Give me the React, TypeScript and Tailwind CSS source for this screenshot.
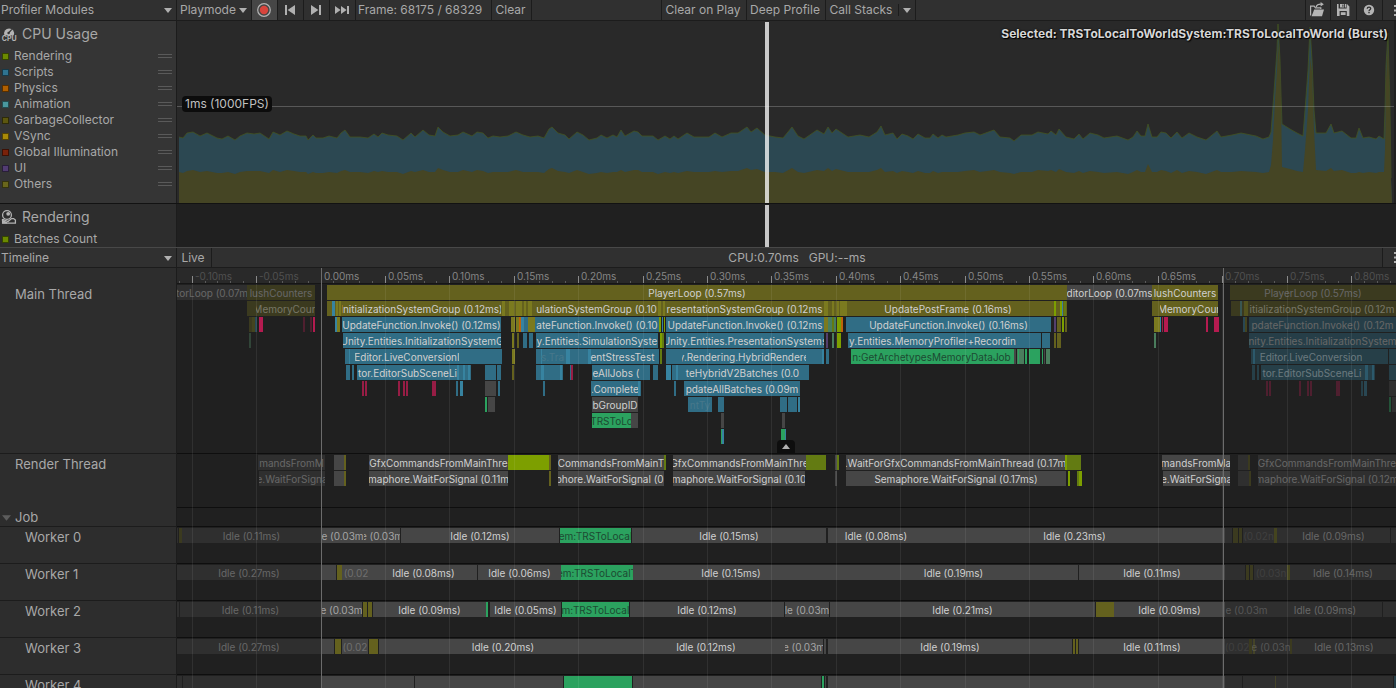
import { clsx } from 'clsx'
import type { ReactNode } from 'react'

// ---------------------------------------------------------------- colours

const TINTS = {
  none: '',
  olive: 'bg-[#64611e]',
  oliveHi: 'bg-[#7b7a1f]',
  blue: 'bg-[#306d85]',
  blueHi: 'bg-[#3783a0]',
  grey: 'bg-[#464646]',
  green: 'bg-[#2ba25f]',
  moss: 'bg-[#4a7d5d]',
  lime: 'bg-[#7d9f00]',
  limeLow: 'bg-[#637b12]',
  red: 'bg-[#971d45]',
  redHi: 'bg-[#b51b50]',
  purple: 'bg-[#53406d]',
  orange: 'bg-[#bd650b]',
}

const LABELS = {
  normal: 'text-[#d0d0d0]',
  soft: 'text-[#a5a5a5]',
  faint: 'text-[#6f6f6f]',
  ghost: 'text-[#47788b]',
  dark: 'text-[#1d4a32]',
}

type Tint = keyof typeof TINTS
type LabelTone = keyof typeof LABELS

// [row, from, to, tint, label, tone]
type Sample = [number, number, number, Tint, string?, LabelTone?]

// ---------------------------------------------------------------- data

const modules = [
  { name: 'Rendering', swatch: 'bg-[#6b8a00]' },
  { name: 'Scripts', swatch: 'bg-[#2f7390]' },
  { name: 'Physics', swatch: 'bg-[#b05f00]' },
  { name: 'Animation', swatch: 'bg-[#4a979e]' },
  { name: 'GarbageCollector', swatch: 'bg-[#5c5710]' },
  { name: 'VSync', swatch: 'bg-[#a88a08]' },
  { name: 'Global Illumination', swatch: 'bg-[#7a220a]' },
  { name: 'UI', swatch: 'bg-[#523c72]' },
  { name: 'Others', swatch: 'bg-[#69661c]' },
]

// visible horizontal range of the charts and the timeline
const VIEW_START = 177
const VIEW_SIZE = 1219
const FRAME_START = 321
const FRAME_END = 1223

const pct = (size: number) => `${(size / VIEW_SIZE) * 100}%`
const at = (x: number) => pct(x - VIEW_START)

// [x, total, others]; "others" follows the total when left out
const frames: [number, number, number?][] = [
  [179, 137], [183, 138], [187, 133], [193, 132], [200, 136], [207, 133], [217, 138], [222, 139], [228, 136],
  [235, 140], [240, 136], [247, 133], [254, 134], [260, 133], [269, 139], [273, 132], [280, 135], [287, 131],
  [294, 134], [300, 136], [306, 136], [308, 140], [313, 135], [316, 138], [323, 138], [329, 136], [337, 138],
  [341, 133], [345, 130], [350, 137], [360, 137], [368, 138], [374, 134], [378, 137], [382, 133], [388, 135],
  [397, 136], [403, 140], [411, 133], [415, 137], [423, 130], [429, 135], [435, 136], [438, 127], [443, 132],
  [450, 136], [458, 135], [463, 132], [472, 136], [477, 132], [483, 133], [488, 138], [493, 136], [500, 137],
  [508, 136], [516, 132], [523, 135], [530, 137], [538, 136], [544, 138], [549, 129], [552, 127], [558, 133],
  [565, 135], [569, 139], [577, 132], [583, 135], [589, 140], [597, 138], [601, 135], [607, 138], [613, 135],
  [617, 137], [621, 130], [625, 136], [634, 131], [638, 132], [642, 136], [653, 136], [658, 140], [665, 136],
  [670, 139], [674, 136], [678, 139], [687, 133], [694, 137], [709, 137], [715, 133], [722, 137], [731, 133],
  [738, 133], [747, 127], [751, 132], [757, 128], [765, 135], [775, 137], [783, 138], [792, 127], [798, 136],
  [804, 139], [817, 130], [824, 134], [828, 127], [832, 133], [836, 129], [848, 137], [860, 135], [869, 137],
  [877, 132], [881, 126], [885, 135], [893, 133], [897, 139], [902, 134], [908, 136], [913, 139], [918, 134],
  [925, 138], [930, 138], [933, 134], [938, 138], [942, 135], [946, 137], [958, 135], [965, 133], [974, 132],
  [980, 135], [994, 130], [1000, 137], [1010, 138], [1014, 141], [1021, 135], [1032, 135], [1038, 132],
  [1048, 134], [1051, 131], [1056, 135], [1059, 129], [1066, 137], [1074, 139], [1079, 134], [1083, 139],
  [1090, 133], [1098, 135], [1104, 138], [1117, 136], [1128, 140], [1133, 137], [1137, 131], [1141, 136],
  [1145, 136], [1148, 124, 164], [1152, 137], [1157, 137], [1161, 132], [1166, 133], [1171, 138], [1177, 132],
  [1182, 138], [1189, 133], [1197, 137], [1206, 140], [1217, 131], [1221, 137], [1232, 135], [1241, 133],
  [1256, 136], [1263, 139], [1269, 137, 172], [1271, 132, 165], [1273, 106, 140], [1275, 78, 100], [1277, 50, 70],
  [1278, 24, 42], [1280, 60, 66], [1281, 95, 100], [1282, 124, 167], [1290, 129, 169], [1297, 133], [1303, 136, 172],
  [1305, 110, 150], [1308, 70, 110], [1310, 27, 57], [1312, 60, 72], [1314, 110, 130], [1316, 133, 170],
  [1326, 133], [1331, 124, 168], [1334, 133], [1342, 131], [1351, 138], [1356, 138], [1359, 128, 172], [1363, 138],
  [1369, 137], [1376, 139], [1379, 136], [1384, 139, 172], [1385, 110, 150], [1386, 66, 80], [1388, 33, 42],
  [1390, 110, 112], [1391, 178, 180],
]

const mainThread: Sample[] = [
  // previous frame
  [0, 177, 247, 'grey', 'torLoop (0.07m'],
  [0, 247, 315, 'olive', 'lushCounters'],
  [1, 247, 315, 'olive'],
  [1, 256, 315, 'none', 'MemoryCoun'],
  [2, 249, 252, 'olive'], [2, 252, 255, 'oliveHi'], [2, 255, 257, 'blueHi'], [2, 259, 263, 'redHi'],
  [2, 303, 305, 'red'], [2, 310, 312, 'red'], [2, 313, 315, 'redHi'],
  [3, 249, 251, 'moss'],
  // selected frame
  [0, 327, 1067, 'olive', 'PlayerLoop (0.57ms)'],
  [0, 1067, 1152, 'grey', 'ditorLoop (0.07ms'],
  [0, 1152, 1218, 'olive', 'lushCounters'],
  [1, 327, 1067, 'olive'],
  [1, 332, 335, 'blueHi'], [1, 336, 338, 'oliveHi'], [1, 339, 341, 'oliveHi'],
  [1, 342, 501, 'none', 'InitializationSystemGroup (0.12ms)'],
  [1, 502, 505, 'oliveHi'], [1, 509, 514, 'oliveHi'], [1, 516, 522, 'oliveHi'], [1, 524, 526, 'oliveHi'],
  [1, 528, 532, 'oliveHi'],
  [1, 535, 658, 'none', 'ulationSystemGroup (0.10'],
  [1, 658, 661, 'oliveHi'], [1, 663, 665, 'oliveHi'],
  [1, 665, 824, 'none', 'resentationSystemGroup (0.12ms'],
  [1, 824, 828, 'oliveHi'], [1, 832, 834, 'oliveHi'], [1, 837, 839, 'oliveHi'], [1, 840, 847, 'oliveHi'],
  [1, 846, 1050, 'none', 'UpdatePostFrame (0.16ms)'],
  [1, 1054, 1056, 'lime'], [1, 1060, 1062, 'lime'], [1, 1062, 1063, 'blueHi'], [1, 1064, 1066, 'limeLow'],
  [1, 1152, 1218, 'olive'],
  [1, 1160, 1218, 'none', 'MemoryCour'],
  [2, 335, 337, 'blueHi'], [2, 337, 340, 'oliveHi'],
  [2, 342, 501, 'blue', 'UpdateFunction.Invoke() (0.12ms)'],
  [2, 511, 515, 'oliveHi'], [2, 516, 519, 'oliveHi'], [2, 519, 521, 'orange'], [2, 521, 524, 'blueHi'],
  [2, 524, 528, 'blue'], [2, 528, 535, 'oliveHi'],
  [2, 535, 659, 'blue', 'ateFunction.Invoke() (0.10'],
  [2, 659, 661, 'lime'], [2, 662, 663, 'blueHi'], [2, 664, 665, 'lime'],
  [2, 666, 824, 'blue', 'UpdateFunction.Invoke() (0.12ms'],
  [2, 824, 828, 'oliveHi'], [2, 828, 832, 'moss'], [2, 832, 834, 'limeLow'], [2, 834, 836, 'moss'],
  [2, 837, 841, 'lime'], [2, 841, 843, 'orange'],
  [2, 846, 1051, 'blue', 'UpdateFunction.Invoke() (0.16ms)'],
  [2, 1054, 1056, 'purple'], [2, 1057, 1061, 'olive'], [2, 1062, 1064, 'lime'], [2, 1065, 1067, 'olive'],
  [2, 1154, 1160, 'oliveHi'], [2, 1160, 1161, 'blueHi'], [2, 1162, 1163, 'red'], [2, 1164, 1168, 'redHi'],
  [2, 1206, 1208, 'redHi'], [2, 1214, 1219, 'redHi'],
  [3, 343, 501, 'blue', 'Unity.Entities.InitializationSystemG'],
  [3, 512, 514, 'oliveHi'], [3, 517, 519, 'olive'], [3, 523, 527, 'blue'], [3, 529, 533, 'blue'],
  [3, 536, 658, 'blue', 'y.Entities.SimulationSyste'],
  [3, 660, 662, 'lime'], [3, 662, 664, 'limeLow'],
  [3, 666, 824, 'blue', 'Unity.Entities.PresentationSystems'],
  [3, 826, 828, 'purple'], [3, 832, 834, 'moss'], [3, 837, 841, 'lime'],
  [3, 848, 1041, 'blue'],
  [3, 848, 1017, 'none', 'y.Entities.MemoryProfiler+Recordin'],
  [3, 1042, 1050, 'blue'], [3, 1054, 1056, 'olive'], [3, 1057, 1061, 'olive'],
  [3, 1154, 1156, 'moss'],
  [4, 345, 502, 'blue'], [4, 349, 350, 'blueHi'],
  [4, 355, 459, 'none', 'Editor.LiveConversionI'],
  [4, 512, 515, 'oliveHi'],
  [4, 536, 659, 'blue'], [4, 541, 542, 'blueHi'], [4, 566, 570, 'blueHi'], [4, 588, 591, 'blueHi'],
  [4, 540, 565, 'none', 's.Tra', 'ghost'],
  [4, 590, 655, 'none', 'entStressTest'],
  [4, 660, 662, 'limeLow'],
  [4, 666, 824, 'blue'], [4, 822, 824, 'blueHi'],
  [4, 682, 806, 'none', 'y.Rendering.HybridRendere'],
  [4, 826, 829, 'blue'],
  [4, 851, 1014, 'green'],
  [4, 851, 1012, 'none', 'n:GetArchetypesMemoryDataJob', 'dark'],
  [4, 1014, 1016, 'grey'], [4, 1017, 1024, 'moss'], [4, 1018, 1019, 'green'], [4, 1025, 1027, 'green'],
  [4, 1029, 1040, 'green'], [4, 1042, 1043, 'green'], [4, 1044, 1045, 'grey'], [4, 1046, 1050, 'moss'],
  [5, 346, 350, 'blue'], [5, 352, 354, 'blue'],
  [5, 357, 471, 'blue'], [5, 457, 459, 'blueHi'], [5, 463, 465, 'blueHi'], [5, 468, 470, 'blueHi'],
  [5, 357, 458, 'none', 'tor.EditorSubSceneLi'],
  [5, 485, 496, 'blue'], [5, 497, 501, 'blue'], [5, 512, 514, 'olive'],
  [5, 536, 563, 'blue'], [5, 541, 544, 'blueHi'], [5, 560, 562, 'blueHi'],
  [5, 570, 571, 'blue'], [5, 571, 573, 'red'],
  [5, 592, 650, 'blue'],
  [5, 592, 640, 'none', 'eAllJobs ('],
  [5, 653, 658, 'blue'], [5, 666, 671, 'blueHi'], [5, 672, 684, 'blue'], [5, 676, 678, 'blueHi'],
  [5, 684, 809, 'blue'],
  [5, 684, 801, 'none', 'teHybridV2Batches (0.0'],
  [6, 362, 364, 'red'], [6, 365, 367, 'red'], [6, 398, 400, 'red'], [6, 403, 405, 'red'], [6, 406, 408, 'red'],
  [6, 432, 436, 'red'], [6, 456, 458, 'blue'], [6, 460, 463, 'blueHi'], [6, 485, 496, 'grey'],
  [6, 498, 500, 'blue'], [6, 543, 545, 'blue'],
  [6, 591, 641, 'blue'], [6, 638, 640, 'blueHi'],
  [6, 592, 638, 'none', '.Complete'],
  [6, 674, 676, 'blue'],
  [6, 684, 800, 'blue', 'pdateAllBatches (0.09m'],
  [7, 485, 487, 'green'], [7, 488, 495, 'grey'],
  [7, 592, 638, 'grey', 'bGroupID'],
  [7, 688, 712, 'blue', 'ntTy', 'ghost'],
  [7, 718, 724, 'blue'], [7, 780, 787, 'blue'], [7, 788, 797, 'blue'], [7, 798, 800, 'blueHi'],
  [8, 592, 631, 'green', 'TRSToLo', 'dark'],
  [8, 631, 638, 'grey'], [8, 721, 724, 'grey'], [8, 782, 785, 'grey'],
  [9, 721, 722, 'green'], [9, 722, 724, 'blueHi'], [9, 781, 785, 'green'], [9, 785, 786, 'blueHi'],
  // next frame
  [0, 1230, 1396, 'olive', 'PlayerLoop (0.57ms)'],
  [1, 1231, 1396, 'olive'], [1, 1240, 1242, 'blueHi'], [1, 1244, 1248, 'oliveHi'],
  [1, 1248, 1396, 'none', 'itializationSystemGroup (0.12m'],
  [2, 1243, 1245, 'blueHi'], [2, 1245, 1247, 'oliveHi'],
  [2, 1249, 1396, 'blue', 'pdateFunction.Invoke() (0.12m'],
  [3, 1249, 1396, 'blue', 'nity.Entities.InitializationSystem'],
  [4, 1251, 1388, 'blue'], [4, 1253, 1255, 'blueHi'],
  [4, 1260, 1362, 'none', 'Editor.LiveConversion'],
  [4, 1389, 1396, 'blue'],
  [5, 1252, 1255, 'blue'], [5, 1257, 1259, 'blue'],
  [5, 1261, 1375, 'blue'], [5, 1365, 1368, 'blueHi'], [5, 1372, 1374, 'blueHi'],
  [5, 1261, 1363, 'none', 'tor.EditorSubSceneLi'],
  [5, 1389, 1396, 'blue'],
  [6, 1266, 1268, 'red'], [6, 1269, 1271, 'red'], [6, 1299, 1301, 'red'], [6, 1307, 1309, 'red'],
  [6, 1310, 1312, 'red'], [6, 1336, 1340, 'red'], [6, 1361, 1363, 'blue'], [6, 1364, 1367, 'blueHi'],
  [6, 1389, 1396, 'grey'],
  [7, 1389, 1391, 'green'], [7, 1392, 1396, 'grey'],
]

const renderThread: Sample[] = [
  [0, 258, 325, 'grey', 'mandsFromM'],
  [1, 259, 325, 'grey', 'e.WaitForSigna'],
  [0, 334, 344, 'grey'], [0, 344, 346, 'olive'], [1, 334, 344, 'grey'], [1, 344, 346, 'olive'],
  [0, 369, 508, 'grey', 'GfxCommandsFromMainThre'],
  [0, 508, 549, 'lime'], [0, 549, 551, 'olive'],
  [0, 558, 664, 'grey', 'CommandsFromMainT'],
  [0, 664, 666, 'limeLow'],
  [0, 673, 806, 'grey', 'GfxCommandsFromMainThre'],
  [0, 806, 826, 'limeLow'], [0, 835, 837, 'grey'], [0, 837, 839, 'limeLow'],
  [0, 846, 1065, 'grey', '.WaitForGfxCommandsFromMainThread (0.17m'],
  [0, 1065, 1067, 'lime'], [0, 1067, 1081, 'limeLow'],
  [0, 1162, 1230, 'grey', 'mandsFromMa'],
  [1, 369, 508, 'grey', 'maphore.WaitForSignal (0.11m'],
  [1, 549, 551, 'olive'],
  [1, 558, 664, 'grey', 'phore.WaitForSignal (0.'],
  [1, 673, 805, 'grey', 'maphore.WaitForSignal (0.10'],
  [1, 835, 837, 'grey'],
  [1, 846, 1066, 'grey', 'Semaphore.WaitForSignal (0.17ms)'],
  [1, 1068, 1070, 'lime'], [1, 1077, 1079, 'limeLow'], [1, 1079, 1082, 'lime'],
  [1, 1163, 1230, 'grey', 'e.WaitForSigna'],
  [0, 1238, 1248, 'grey'], [0, 1248, 1250, 'olive'], [1, 1238, 1249, 'grey'], [1, 1249, 1251, 'olive'],
  [0, 1258, 1396, 'grey', 'GfxCommandsFromMainThre'],
  [1, 1258, 1396, 'grey', 'maphore.WaitForSignal (0.12m'],
]

const workers: Sample[][] = [
  [
    [0, 177, 178, 'grey'], [0, 179, 182, 'olive'], [0, 182, 321, 'grey', 'Idle (0.11ms)'],
    [0, 321, 364, 'grey', 'e (0.03m', 'soft'], [0, 364, 400, 'grey', 'e (0.03m', 'soft'],
    [0, 401, 559, 'grey', 'Idle (0.12ms)'], [0, 560, 631, 'green', 'em:TRSToLocal', 'dark'],
    [0, 632, 826, 'grey', 'Idle (0.15ms)'], [0, 828, 924, 'grey', 'Idle (0.08ms)'],
    [0, 924, 1225, 'grey', 'Idle (0.23ms)'],
    [0, 1225, 1232, 'grey'], [0, 1233, 1238, 'olive'], [0, 1239, 1242, 'olive'],
    [0, 1243, 1274, 'grey', '(0.02n', 'faint'], [0, 1274, 1277, 'oliveHi'],
    [0, 1277, 1390, 'grey', 'Idle (0.09ms)'], [0, 1391, 1396, 'grey'],
  ],
  [
    [0, 177, 321, 'grey', 'Idle (0.27ms)'],
    [0, 321, 336, 'grey'], [0, 337, 342, 'olive'], [0, 342, 370, 'grey', '(0.02', 'faint'],
    [0, 370, 477, 'grey', 'Idle (0.08ms)'], [0, 478, 561, 'grey', 'Idle (0.06ms)'],
    [0, 561, 633, 'green', 'em:TRSToLocalT', 'dark'], [0, 633, 829, 'grey', 'Idle (0.15ms)'],
    [0, 829, 1078, 'grey', 'Idle (0.19ms)'], [0, 1079, 1225, 'grey', 'Idle (0.11ms)'],
    [0, 1225, 1245, 'grey'], [0, 1246, 1249, 'olive'], [0, 1250, 1253, 'olive'],
    [0, 1254, 1288, 'grey', '(0.03n', 'faint'], [0, 1287, 1290, 'oliveHi'],
    [0, 1290, 1396, 'grey', 'Idle (0.14ms)'],
  ],
  [
    [0, 177, 179, 'grey'], [0, 180, 321, 'grey', 'Idle (0.11ms)'],
    [0, 321, 362, 'grey', 'e (0.03m', 'soft'], [0, 363, 367, 'olive'], [0, 368, 372, 'olive'],
    [0, 373, 486, 'grey', 'Idle (0.09ms)'], [0, 486, 488, 'green'], [0, 490, 561, 'grey', 'Idle (0.05ms)'],
    [0, 562, 629, 'green', 'm:TRSToLocal', 'dark'], [0, 630, 784, 'grey', 'Idle (0.12ms)'],
    [0, 785, 829, 'grey', 'le (0.03m', 'soft'], [0, 830, 1095, 'grey', 'Idle (0.21ms)'],
    [0, 1096, 1114, 'olive'], [0, 1114, 1225, 'grey', 'Idle (0.09ms)'],
    [0, 1225, 1268, 'grey', 'e (0.03m', 'soft'], [0, 1268, 1382, 'grey', 'Idle (0.09ms)'],
    [0, 1383, 1396, 'grey'],
  ],
  [
    [0, 177, 321, 'grey', 'Idle (0.27ms)'],
    [0, 321, 334, 'grey'], [0, 335, 341, 'olive'], [0, 342, 368, 'grey', '(0.02', 'faint'],
    [0, 369, 378, 'olive'], [0, 379, 627, 'grey', 'Idle (0.20ms)'], [0, 627, 785, 'grey', 'Idle (0.12ms)'],
    [0, 785, 823, 'grey', 'e (0.03m', 'soft'], [0, 824, 826, 'grey'], [0, 828, 1072, 'grey', 'Idle (0.19ms)'],
    [0, 1073, 1075, 'olive'], [0, 1076, 1078, 'olive'], [0, 1079, 1225, 'grey', 'Idle (0.11ms)'],
    [0, 1225, 1249, 'grey', '(0.02', 'faint'], [0, 1252, 1290, 'grey', 'e (0.03n', 'soft'],
    [0, 1249, 1252, 'olive'], [0, 1253, 1255, 'olive'], [0, 1290, 1292, 'olive'],
    [0, 1292, 1396, 'grey', 'Idle (0.13ms)'],
  ],
  [
    [0, 177, 182, 'grey'], [0, 183, 321, 'grey'], [0, 321, 414, 'grey'], [0, 415, 563, 'grey'],
    [0, 564, 632, 'green'], [0, 633, 821, 'grey'], [0, 822, 824, 'green'], [0, 825, 826, 'grey'],
    [0, 828, 1225, 'grey'], [0, 1225, 1242, 'grey'], [0, 1243, 1393, 'grey'], [0, 1275, 1276, 'olive'],
    [0, 1394, 1396, 'blue'],
  ],
]

// one major tick every 0.05ms, five minor steps in between
const majorTicks = Array.from({ length: 19 }, (_, i) => ({
  x: Math.floor(FRAME_START + (i - 2) * 64.4),
  label: `${((i - 2) * 0.05).toFixed(2)}ms`,
}))
const minorTicks = Array.from({ length: 95 }, (_, i) => Math.floor(FRAME_START + (i - 11) * 12.88)).filter(
  (x) => x < VIEW_START + VIEW_SIZE,
)

// ---------------------------------------------------------------- icons

function Caret({ className }: { className?: string }) {
  return (
    <svg viewBox="0 0 8 5" className={clsx('h-[5px] w-2 shrink-0 fill-[#b0b0b0]', className)} aria-hidden="true">
      <path d="M0 0h8L4 5z" />
    </svg>
  )
}

function CpuIcon() {
  return (
    <svg viewBox="0 0 16 16" className="size-4 shrink-0" aria-hidden="true">
      <path d="M3.4 9.2A5 5 0 1 1 12.8 9.2z" fill="#b4b4b4" />
      <path d="M7.6 7 10.8 3.4" stroke="#353535" strokeWidth="1.2" />
      <circle cx="7.6" cy="7" r="1.2" fill="#353535" />
      <text x="8.2" y="15.4" textAnchor="middle" fontSize="7" fontWeight="700" fill="#b4b4b4">
        CPU
      </text>
    </svg>
  )
}

function RenderingIcon() {
  return (
    <svg viewBox="0 0 16 16" className="size-4 shrink-0" fill="none" stroke="#b4b4b4" strokeWidth="1.3" aria-hidden="true">
      <circle cx="6" cy="6" r="4.4" />
      <circle cx="7.2" cy="4.8" r="1.9" fill="#b4b4b4" stroke="none" />
      <path d="M1.6 10v4.2H14.4V11L12.6 9.6h-2L7 12.6 1.6 10.4" />
      <path d="M1.6 11.6 6 13.8H2z" fill="#b4b4b4" />
    </svg>
  )
}

function RecordIcon() {
  return (
    <svg viewBox="0 0 16 16" className="size-4" aria-hidden="true">
      <circle cx="8" cy="8" r="6.3" fill="none" stroke="#b4b4b4" strokeWidth="1.2" />
      <circle cx="8" cy="8" r="4.2" fill="#d8443c" />
    </svg>
  )
}

function StepIcon({ d }: { d: string }) {
  return (
    <svg viewBox="0 0 16 16" className="size-4 shrink-0 fill-[#b0b0b0]" aria-hidden="true">
      <path d={d} />
    </svg>
  )
}

function OpenIcon() {
  return (
    <svg viewBox="0 0 16 16" className="size-4" fill="none" aria-hidden="true">
      <path d="M2.6 14.2H13L15 7.4H5.2z" fill="#b4b4b4" />
      <path d="M1.6 13.6V4.2h3.6l1.2 1.6h5.4V7" stroke="#b4b4b4" strokeWidth="1.2" />
      <path d="M7.2 5C7.8 2.8 9.6 2 12.8 2.2" stroke="#b4b4b4" strokeWidth="1.3" />
      <path d="M11.6 0 14.8 2.3 11.6 4.6z" fill="#b4b4b4" />
    </svg>
  )
}

function SaveIcon() {
  return (
    <svg viewBox="0 0 16 16" className="size-4" aria-hidden="true">
      <path
        fill="#b4b4b4"
        fillRule="evenodd"
        d="M2 2h1.6v4.6h8V2H12l2.4 2.4V14H2zm2.6 7v5h7.2V9zM5 2h4.2v3.6H5zm5 0h1v3.6h-1zM7.4 2.6v2.2h1V2.6z"
      />
      <path fill="#b4b4b4" d="M5.8 10.2h4.8V13H5.8z" />
    </svg>
  )
}

function HelpIcon() {
  return (
    <svg viewBox="0 0 16 16" className="size-4" fill="none" aria-hidden="true">
      <circle cx="8" cy="8" r="5.2" fill="#b4b4b4" />
      <path d="M6.2 6.8C6.3 4.4 9.8 4.6 9.7 6.6 9.6 7.8 8 7.8 8 9.2" stroke="#303030" strokeWidth="1.3" />
      <path d="M7.3 10h1.4v1.3H7.3z" fill="#303030" />
    </svg>
  )
}

function KebabButton({ label }: { label: string }) {
  return (
    <button type="button" aria-label={label} className="flex w-[13px] items-center justify-end">
      <svg viewBox="0 0 2 11" className="h-[11px] w-0.5 fill-[#b0b0b0]" aria-hidden="true">
        <path d="M0 0h2v2H0zM0 4.5h2v2H0zM0 9h2v2H0z" />
      </svg>
    </button>
  )
}

// ---------------------------------------------------------------- toolbar

function ToolButton({ className, label, children }: { className?: string; label?: string; children: ReactNode }) {
  return (
    <button
      type="button"
      aria-label={label}
      className={clsx(
        'flex shrink-0 items-center justify-center border-r border-[#1c1c1c] pr-0.5 whitespace-nowrap',
        className,
      )}
    >
      {children}
    </button>
  )
}

function Dropdown({ label, value, className, caret }: { label: string; value: string; className: string; caret: string }) {
  return (
    <div className={clsx('relative shrink-0 border-r border-[#1c1c1c]', className)}>
      <select aria-label={label} className="block h-full w-full appearance-none bg-transparent outline-none">
        <option>{value}</option>
      </select>
      <Caret className={clsx('pointer-events-none absolute top-2', caret)} />
    </div>
  )
}

function Toolbar() {
  return (
    <header className="flex h-[21px] shrink-0 border-b border-[#1c1c1c] bg-[#303030]">
      <ToolButton className="w-[177px] justify-between! pr-1! pl-px">
        Profiler Modules
        <Caret />
      </ToolButton>
      <Dropdown label="Target" value="Playmode" className="w-[75px] pl-[3px]" caret="right-1" />
      <ToolButton label="Record" className="w-[26px] bg-[#464646]">
        <RecordIcon />
      </ToolButton>
      <ToolButton label="Previous frame" className="w-[26px]">
        <StepIcon d="M3 3h2v10H3zM13 3v10L5.6 8z" />
      </ToolButton>
      <ToolButton label="Next frame" className="w-[26px]">
        <StepIcon d="M3 3v10l7.4-5zM11 3h2v10h-2z" />
      </ToolButton>
      <ToolButton label="Current frame" className="w-[26px]">
        <StepIcon d="M1 4v8l5.6-4zM7 4v8l5.6-4zM13 4h2v8h-2z" />
      </ToolButton>
      <p className="flex w-[136px] shrink-0 items-center border-r border-[#1c1c1c] pl-0.5 whitespace-nowrap">
        Frame: 68175 / 68329
      </p>
      <ToolButton className="w-10">Clear</ToolButton>
      <div className="w-[130px] border-r border-[#1c1c1c]" />
      <ToolButton className="w-[85px]">Clear on Play</ToolButton>
      <ToolButton className="w-[79px]">Deep Profile</ToolButton>
      <div className="flex w-[90px] shrink-0 border-r border-[#1c1c1c]">
        <ToolButton className="my-1 w-[73px]">Call Stacks</ToolButton>
        <button type="button" aria-label="Call stack options" className="flex flex-1 items-center justify-center">
          <Caret />
        </button>
      </div>
      <div className="flex-1 border-r border-[#1c1c1c]" />
      <ToolButton label="Load" className="w-[25px]">
        <OpenIcon />
      </ToolButton>
      <ToolButton label="Save" className="w-[26px]">
        <SaveIcon />
      </ToolButton>
      <ToolButton label="Help" className="w-[26px]">
        <HelpIcon />
      </ToolButton>
      <KebabButton label="Window menu" />
    </header>
  )
}

// ---------------------------------------------------------------- charts

function Swatch({ className }: { className: string }) {
  return <span className={clsx('size-[7px] shrink-0 border border-black/50', className)} />
}

function FrameCursor({ className }: { className: string }) {
  return <div className={clsx('absolute w-1 bg-white/75', className)} style={{ left: at(765) }} />
}

function CpuChart() {
  const others = (total: number, value?: number) => value ?? Math.round(172 + (total - 136) * 0.4)
  const first = frames[0][0]
  const last = frames[frames.length - 1][0] + 1
  const totalLine = frames.map(([x, total]) => `${x} ${total}`).join('L')
  const othersLine = frames.map(([x, total, value]) => `${x} ${others(total, value)}`).join('L')

  return (
    <svg viewBox="177 21 1219 182" preserveAspectRatio="none" className="absolute inset-0 h-full w-full" aria-hidden="true">
      <path d={`M${first} 203L${totalLine}L${last} 203z`} fill="#2c4852" />
      <path d={`M${totalLine}`} fill="none" stroke="#44521f" strokeWidth="1" strokeOpacity="0.8" />
      <path d={`M${first} 203L${othersLine}L${last} 203z`} fill="#454524" />
      <path d="M177 106h1217v1H177z" fill="#fff" fillOpacity="0.22" />
    </svg>
  )
}

function CpuModule() {
  return (
    <section className="flex h-[183px] shrink-0 border-b border-[#121212]">
      <div className="w-[177px] shrink-0 border-r border-[#1c1c1c] bg-[#353535]">
        <h2 className="flex h-[27px] items-center gap-[5px] pb-0.5 pl-px text-sm">
          <CpuIcon />
          CPU Usage
        </h2>
        <ul>
          {modules.map((m) => (
            <li key={m.name} className="flex h-4 items-center pr-1 pl-0.5">
              <Swatch className={m.swatch} />
              <span className="flex-1 pl-[5px]">{m.name}</span>
              <span className="h-1 w-3.5 border-y border-[#5a5a5a]" />
            </li>
          ))}
        </ul>
      </div>
      <div className="relative flex-1 bg-[#292929]">
        <CpuChart />
        <div className="absolute inset-y-0 right-0 w-0.5 bg-[#202020]" />
        <FrameCursor className="top-px bottom-0" />
        <span className="absolute top-[75px] left-[5px] rounded-sm bg-[#0c0c0c] px-[3px] leading-4 text-[#c0c0c0]">
          1ms (1000FPS)
        </span>
        <p className="absolute top-[5px] right-2 leading-4 font-bold text-[#d6d6d6] [text-shadow:1px_1px_1px_#000,0_0_2px_#000]">
          Selected: TRSToLocalToWorldSystem:TRSToLocalToWorld (Burst)
        </p>
      </div>
    </section>
  )
}

function RenderingModule() {
  return (
    <section className="flex h-11 shrink-0 border-b border-[#484848]">
      <div className="w-[177px] shrink-0 border-r border-[#1c1c1c] bg-[#2d2d2d]">
        <h2 className="flex h-[27px] items-center gap-[5px] pb-0.5 pl-px text-sm">
          <RenderingIcon />
          Rendering
        </h2>
        <p className="flex h-4 items-center pl-0.5">
          <Swatch className="bg-[#6b8a00]" />
          <span className="pl-[5px]">Batches Count</span>
        </p>
      </div>
      <div className="relative flex-1 bg-[#202020]">
        <FrameCursor className="top-px bottom-0" />
      </div>
    </section>
  )
}

// ---------------------------------------------------------------- timeline

function TimelineToolbar() {
  return (
    <div className="flex h-5 shrink-0 border-b border-[#1c1c1c] bg-[#303030]">
      <Dropdown label="View" value="Timeline" className="w-[177px] pl-px" caret="right-1" />
      <ToolButton className="w-[35px]">Live</ToolButton>
      <p className="flex flex-1 items-center justify-center gap-2.5 border-r border-[#1c1c1c]">
        <span>CPU:0.70ms</span>
        <span>GPU:--ms</span>
      </p>
      <KebabButton label="Timeline menu" />
    </div>
  )
}

function outsideFrame(x: number) {
  return x < FRAME_START - 1 || x > FRAME_END - 3
}

function Ruler() {
  return (
    <div className="relative h-4 overflow-hidden border-b border-[#161616] bg-[#292929] text-[10px]">
      {minorTicks.map((x) => (
        <span key={x} className="absolute bottom-0 h-0.5 w-px bg-[#5a5a5a]" style={{ left: at(x) }} />
      ))}
      {majorTicks.map(({ x, label }) => (
        <span
          key={label}
          className={clsx(
            'absolute inset-y-0 flex items-center pt-0.5 pl-[3px]',
            outsideFrame(x) ? 'text-[#505050]' : 'text-[#868686]',
          )}
          style={{ left: at(x) }}
        >
          <i className="absolute bottom-0 left-0 h-[7px] w-px bg-[#8a8a8a]" />
          {label}
        </span>
      ))}
    </div>
  )
}

function Track({ samples, className, children }: { samples: Sample[]; className: string; children?: ReactNode }) {
  return (
    <div className={clsx('relative border-b border-[#0e0e0e] text-[10px]', className)}>
      {samples.map(([row, from, to, tint, label, tone = 'normal'], i) => (
        <div
          key={i}
          className={clsx(
            'absolute flex h-[15px] items-center justify-center overflow-hidden pt-0.5 whitespace-nowrap',
            TINTS[tint],
            LABELS[tone],
            outsideFrame(from) && tint !== 'redHi' && 'opacity-40',
          )}
          style={{ left: at(from), width: pct(to - from), top: 1 + row * 16 }}
        >
          {label}
        </div>
      ))}
      {children}
    </div>
  )
}

function Timeline() {
  return (
    <main className="flex min-h-0 flex-1 overflow-hidden">
      <div className="w-[177px] shrink-0 border-r border-[#1c1c1c] bg-[#2d2d2d] text-[13px]">
        <div className="h-4" />
        <div className="h-[170px] border-b border-[#1c1c1c] pl-[15px] leading-5">Main Thread</div>
        <div className="h-[54px] pl-[15px] leading-5">Render Thread</div>
        <button type="button" className="flex h-[19px] w-full items-center gap-1 border-b border-[#1c1c1c] pt-0.5 pl-0.5">
          <Caret className="h-2! w-[9px]! fill-[#5c5c5c]!" />
          Job
        </button>
        {workers.map((_, i) => (
          <div key={i} className="h-[37px] border-b border-[#1c1c1c] pl-[25px] leading-5">
            Worker {i}
          </div>
        ))}
      </div>
      <div className="relative flex-1 overflow-hidden bg-[#202020]">
        <Ruler />
        <Track samples={mainThread} className="h-[170px]">
          <button
            type="button"
            aria-label="Collapse thread"
            className="absolute bottom-0 flex h-[13px] w-[18px] items-center justify-center rounded-t-sm bg-[#0e0e0e]"
            style={{ left: at(777) }}
          >
            <Caret className="rotate-180" />
          </button>
        </Track>
        <Track samples={renderThread} className="h-[54px]" />
        <div className="h-[19px] border-b border-[#0e0e0e]" />
        {workers.map((samples, i) => (
          <Track key={i} samples={samples} className="h-[37px]" />
        ))}
        <div className="pointer-events-none absolute inset-x-0 top-4 bottom-0">
          {majorTicks.map(({ x, label }) => (
            <i key={label} className="absolute inset-y-0 w-px bg-white/7" style={{ left: at(x) }} />
          ))}
        </div>
        <i className="absolute inset-y-0 w-px bg-[#6c6c6c]" style={{ left: at(FRAME_START) }} />
        <i className="absolute inset-y-0 w-px bg-[#6c6c6c]" style={{ left: at(FRAME_END) }} />
      </div>
    </main>
  )
}

export default function App() {
  return (
    <div className="flex h-screen flex-col overflow-hidden bg-[#202020] font-['Inter',sans-serif] text-xs text-[#a8a8a8]">
      <Toolbar />
      <CpuModule />
      <RenderingModule />
      <TimelineToolbar />
      <Timeline />
    </div>
  )
}
